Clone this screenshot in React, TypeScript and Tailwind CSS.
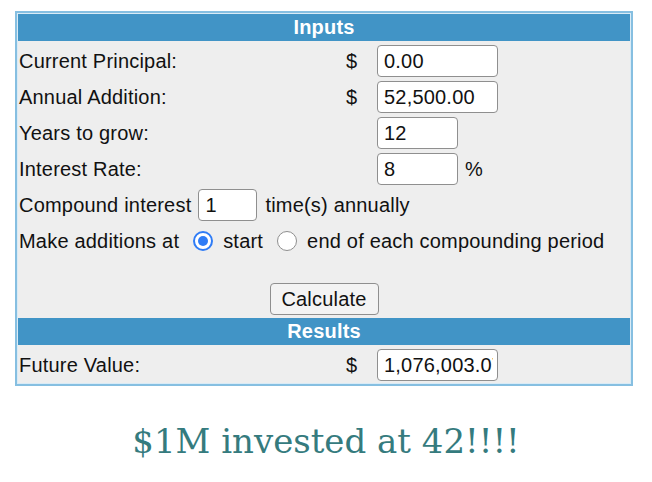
import React from "react";

const field =
  "h-[32px] border border-[#8f8f8f] rounded-[4px] bg-white pl-[6px] pr-[4px] text-[20px] tracking-[0.2px] text-[#111] outline-none";

function Radio({ checked }: { checked?: boolean }) {
  return checked ? (
    <span className="flex items-center justify-center w-[20px] h-[20px] rounded-full border-2 border-[#2f7cf6] bg-white">
      <span className="block w-[10px] h-[10px] rounded-full bg-[#2f7cf6]" />
    </span>
  ) : (
    <span className="block w-[20px] h-[20px] rounded-full border border-[#8f8f8f] bg-white" />
  );
}

function Row({ label, dollar, children }: { label: string; dollar?: boolean; children: React.ReactNode }) {
  return (
    <div className="grid grid-cols-[327px_31px_1fr] items-center h-[36px]">
      <span>{label}</span>
      <span>{dollar ? "$" : ""}</span>
      <div className="flex items-center">{children}</div>
    </div>
  );
}

export default function App() {
  return (
    <div className="w-[652px] h-[482px] bg-white pt-[11px] font-['Liberation_Sans',Arial,sans-serif] text-[20px] tracking-[0.2px] text-[#111]">
      {/* calculator table */}
      <div className="ml-[15px] w-[618px] border-2 border-[#86bfe1] bg-[#d9ebf6] p-px">
        <div className="bg-[#eeeeee]">
          <div className="h-[27px] bg-[#4194c6] text-white font-bold text-center leading-[27px]">Inputs</div>
          <div className="pt-[2px] pl-px">
            <Row label="Current Principal:" dollar>
              <input className={`${field} w-[121px]`} defaultValue="0.00" />
            </Row>
            <Row label="Annual Addition:" dollar>
              <input className={`${field} w-[121px]`} defaultValue="52,500.00" />
            </Row>
            <Row label="Years to grow:">
              <input className={`${field} w-[81px]`} defaultValue="12" />
            </Row>
            <Row label="Interest Rate:">
              <input className={`${field} w-[81px]`} defaultValue="8" />
              <span className="ml-[7px]">%</span>
            </Row>
            <div className="flex items-center h-[36px]">
              <span>Compound interest</span>
              <input className={`${field} w-[59px] ml-[7px]`} defaultValue="1" />
              <span className="ml-[8px]">time(s) annually</span>
            </div>
            <div className="flex items-center h-[36px]">
              <span>Make additions at</span>
              <span className="ml-[14px]"><Radio checked /></span>
              <span className="ml-[10px]">start</span>
              <span className="ml-[14px]"><Radio /></span>
              <span className="ml-[10px]">end of each compounding period</span>
            </div>
          </div>
          <div className="h-[22px]" />
          <div className="h-[37px] flex justify-center pt-[2px]">
            <button className="w-[109px] h-[32px] border border-[#8f8f8f] rounded-[4px] bg-[#f3f3f3] text-[20px]">
              Calculate
            </button>
          </div>
          <div className="h-[27px] bg-[#4194c6] text-white font-bold text-center leading-[27px]">Results</div>
          <div className="pt-[2px] pl-px">
            <Row label="Future Value:" dollar>
              <input className={`${field} w-[121px]`} defaultValue="1,076,003.07" readOnly />
            </Row>
          </div>
        </div>
      </div>

      <h1 className="mt-[30px] text-center text-[34px] tracking-normal text-[#357b7e] font-['DejaVu_Serif',Georgia,serif]">
        $1M invested at 42!!!!
      </h1>
    </div>
  );
}
